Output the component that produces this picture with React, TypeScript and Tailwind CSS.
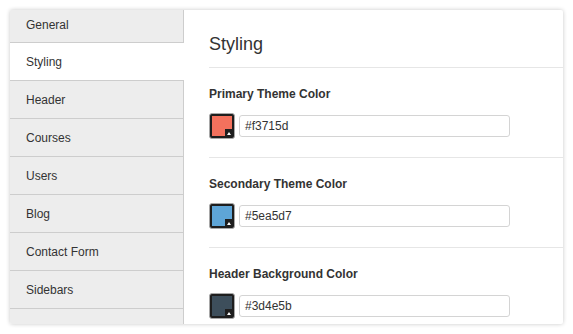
import React from "react";

const menu = [
  "General",
  "Styling",
  "Header",
  "Courses",
  "Users",
  "Blog",
  "Contact Form",
  "Sidebars",
];

const colors = [
  { label: "Primary Theme Color", value: "#f3715d" },
  { label: "Secondary Theme Color", value: "#5ea5d7" },
  { label: "Header Background Color", value: "#3d4e5b" },
];

const Swatch = ({ color }: { color: string }) => (
  <div className="w-[26px] h-[26px] rounded-[3px] border border-[#a8a8a8] bg-[#1e1e1e] p-[2px] shrink-0">
    <div className="relative w-full h-full">
      <div className="absolute inset-0" style={{ background: color }} />
      <div className="absolute right-0 bottom-0 w-[7px] h-[7px] bg-[#1e1e1e] flex items-end justify-center">
        <div className="w-0 h-0 border-l-[2px] border-r-[2px] border-b-[3px] border-l-transparent border-r-transparent border-b-white mb-[1px]" />
      </div>
    </div>
  </div>
);

export default function App() {
  return (
    <div
      className="w-[573px] h-[334px] bg-white p-[10px]"
      style={{ fontFamily: '"Liberation Sans", Arial, sans-serif' }}
    >
      <div className="flex w-[553px] h-[314px] rounded-[2px] overflow-hidden shadow-[0_0_4px_rgba(0,0,0,0.22)] bg-white">
        <div className="w-[174px] flex flex-col bg-[#ededed]">
          {menu.map((item, i) => (
            <div
              key={item}
              className={
                (i === 0 ? "h-[33px] pb-[2px] " : "h-[38px] ") +
                "flex items-center pl-[16px] text-[12px] text-[#333] border-b border-[#cdcdcd] " +
                (item === "Styling"
                  ? "bg-white"
                  : "border-r bg-[#ededed]")
              }
            >
              {item}
            </div>
          ))}
          <div className="flex-1 border-r border-[#cdcdcd]" />
        </div>
        <div className="flex-1 pl-[25px] overflow-hidden">
          <div className="pt-[22px] pb-[11px] border-b border-[#e6e6e6] text-[18px] leading-[24px] text-[#333]">
            Styling
          </div>
          {colors.map((c) => (
            <div
              key={c.label}
              className="pt-[19px] pb-[18px] border-b border-[#e6e6e6]"
            >
              <div className="text-[12px] leading-[14px] font-bold text-[#333]">
                {c.label}
              </div>
              <div className="flex items-center gap-[4px] mt-[12px]">
                <Swatch color={c.value} />
                <div className="w-[271px] h-[22px] border border-[#d4d4d4] rounded-[3px] flex items-center pl-[5px] text-[12px] text-[#333]">
                  {c.value}
                </div>
              </div>
            </div>
          ))}
        </div>
      </div>
    </div>
  );
}
